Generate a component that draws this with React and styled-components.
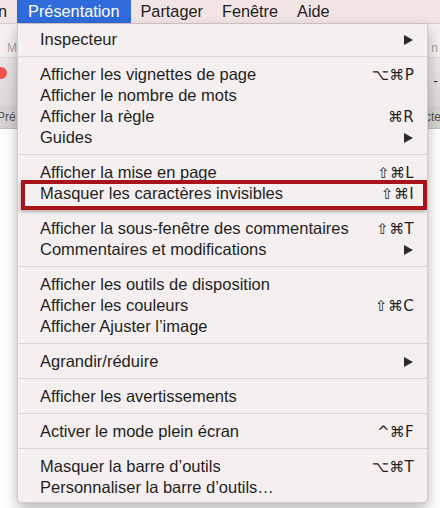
import React from 'react';
import styled, { createGlobalStyle } from 'styled-components';

const GlobalStyle = createGlobalStyle`
  html, body { margin: 0; padding: 0; }
  body {
    width: 440px;
    height: 508px;
    overflow: hidden;
    background: #ffffff;
    font-family: "Liberation Sans", Arial, sans-serif;
  }
`;

const groups = [
  [{ label: 'Inspecteur', submenu: true }],
  [
    { label: 'Afficher les vignettes de page', shortcut: '⌥⌘P' },
    { label: 'Afficher le nombre de mots' },
    { label: 'Afficher la règle', shortcut: '⌘R' },
    { label: 'Guides', submenu: true },
  ],
  [
    { label: 'Afficher la mise en page', shortcut: '⇧⌘L' },
    { label: 'Masquer les caractères invisibles', shortcut: '⇧⌘I', marked: true },
    { label: 'Afficher la sous-fenêtre des commentaires', shortcut: '⇧⌘T' },
    { label: 'Commentaires et modifications', submenu: true },
  ],
  [
    { label: 'Afficher les outils de disposition' },
    { label: 'Afficher les couleurs', shortcut: '⇧⌘C' },
    { label: 'Afficher Ajuster l’image' },
  ],
  [{ label: 'Agrandir/réduire', submenu: true }],
  [{ label: 'Afficher les avertissements' }],
  [{ label: 'Activer le mode plein écran', shortcut: '^⌘F' }],
  [
    { label: 'Masquer la barre d’outils', shortcut: '⌥⌘T' },
    { label: 'Personnaliser la barre d’outils…' },
  ],
];

function App() {
  return (
    <Screen>
      <GlobalStyle />
      <MenuBar>
        <BarItem>n</BarItem>
        <BarItem active>Présentation</BarItem>
        <BarItem>Partager</BarItem>
        <BarItem>Fenêtre</BarItem>
        <BarItem>Aide</BarItem>
      </MenuBar>

      <Backdrop>
        <TitleStrip>
          <TitleHint>M</TitleHint>
          <TitleHint right>n</TitleHint>
        </TitleStrip>
        <Toolbar>
          <TrafficLight />
          <ToolbarDash>-</ToolbarDash>
        </Toolbar>
        <TabStrip>
          <TabLabel>Pré</TabLabel>
          <TabLabel right>cte</TabLabel>
        </TabStrip>
      </Backdrop>

      <Menu>
        {groups.map((group, gi) => (
          <React.Fragment key={gi}>
            {gi > 0 && <Separator />}
            {group.map((item) => (
              <Row key={item.label} marked={item.marked}>
                <Label>{item.label}</Label>
                {item.shortcut && <Shortcut>{item.shortcut}</Shortcut>}
                {item.submenu && <Arrow />}
                {item.marked && <Highlight />}
              </Row>
            ))}
          </React.Fragment>
        ))}
      </Menu>
    </Screen>
  );
}

export default App;

const Screen = styled.div`
  position: relative;
  width: 440px;
  height: 508px;
  overflow: hidden;
  background: #ffffff;
`;

const MenuBar = styled.div`
  display: flex;
  align-items: stretch;
  height: 24px;
  background: #f1e4e4;
  border-bottom: 1px solid #d9cccc;
  box-sizing: border-box;
`;

const BarItem = styled.div`
  display: flex;
  align-items: center;
  padding: ${p => (p.active ? '0 12px 0 11px' : '0 10px 0 9px')};
  font-size: 16.3px;
  color: ${p => (p.active ? '#ffffff' : '#1e1e1e')};
  background: ${p => (p.active ? '#2f6bdb' : 'transparent')};
  &:first-child {
    margin-left: -2px;
    padding: 0 10px 0 0;
  }
`;

const Backdrop = styled.div`
  display: flex;
  flex-direction: column;
`;

const TitleStrip = styled.div`
  display: flex;
  justify-content: space-between;
  align-items: flex-end;
  height: 33px;
  background: #f4f0f0;
  border-bottom: 1px solid #e0dada;
`;

const TitleHint = styled.span`
  font-size: 12px;
  color: #a8a4a4;
  padding: ${p => (p.right ? '0 0 2px 0' : '0 0 2px 7px')};
  margin-right: ${p => (p.right ? '2px' : '0')};
`;

const Toolbar = styled.div`
  display: flex;
  justify-content: space-between;
  align-items: center;
  height: 48px;
  background: linear-gradient(#ebe7e7, #dcd8d8);
`;

const TrafficLight = styled.div`
  width: 12px;
  height: 12px;
  margin-left: -5px;
  margin-top: -18px;
  border-radius: 50%;
  background: #f0524e;
`;

const ToolbarDash = styled.span`
  font-size: 14px;
  color: #333;
  margin-right: 2px;
  margin-top: -2px;
`;

const TabStrip = styled.div`
  display: flex;
  justify-content: space-between;
  align-items: center;
  height: 22px;
  background: #d6d2d2;
  border-bottom: 1px solid #c4c0c0;
`;

const TabLabel = styled.span`
  font-size: 12px;
  color: #555;
  margin-left: ${p => (p.right ? '0' : '-3px')};
  margin-right: ${p => (p.right ? '-1px' : '0')};
`;

const Menu = styled.div`
  position: absolute;
  left: 17px;
  top: 24px;
  width: 411px;
  box-sizing: border-box;
  padding: 5px 0 4px;
  background: #f5efef;
  border: 1px solid #d4cccc;
  border-top: none;
  border-radius: 0 0 5px 5px;
  box-shadow: 0 6px 14px rgba(0, 0, 0, 0.28), 0 0 1px rgba(0, 0, 0, 0.2);
`;

const Row = styled.div`
  position: relative;
  display: flex;
  align-items: center;
  justify-content: space-between;
  height: 21px;
  margin-bottom: ${p => (p.marked ? '14px' : '0')};
  padding: 0 13px 0 22px;
  font-size: 16.5px;
  color: #1f1f1f;
`;

const Label = styled.span`
  white-space: nowrap;
`;

const Shortcut = styled.span`
  font-family: "DejaVu Sans", sans-serif;
  font-size: 15px;
  color: #1f1f1f;
  letter-spacing: 0.3px;
`;

const Arrow = styled.span`
  width: 0;
  height: 0;
  margin-right: 1px;
  border-top: 5px solid transparent;
  border-bottom: 5px solid transparent;
  border-left: 9px solid #2a2a2a;
`;

const Highlight = styled.span`
  position: absolute;
  left: 3px;
  right: 0;
  top: -3px;
  bottom: -6px;
  border: 4px solid #a8121a;
  box-shadow: -1px 2px 3px rgba(0, 0, 0, 0.25);
`;

const Separator = styled.div`
  height: 1px;
  margin: 6px 0 7px;
  background: #dcd5d5;
`;
